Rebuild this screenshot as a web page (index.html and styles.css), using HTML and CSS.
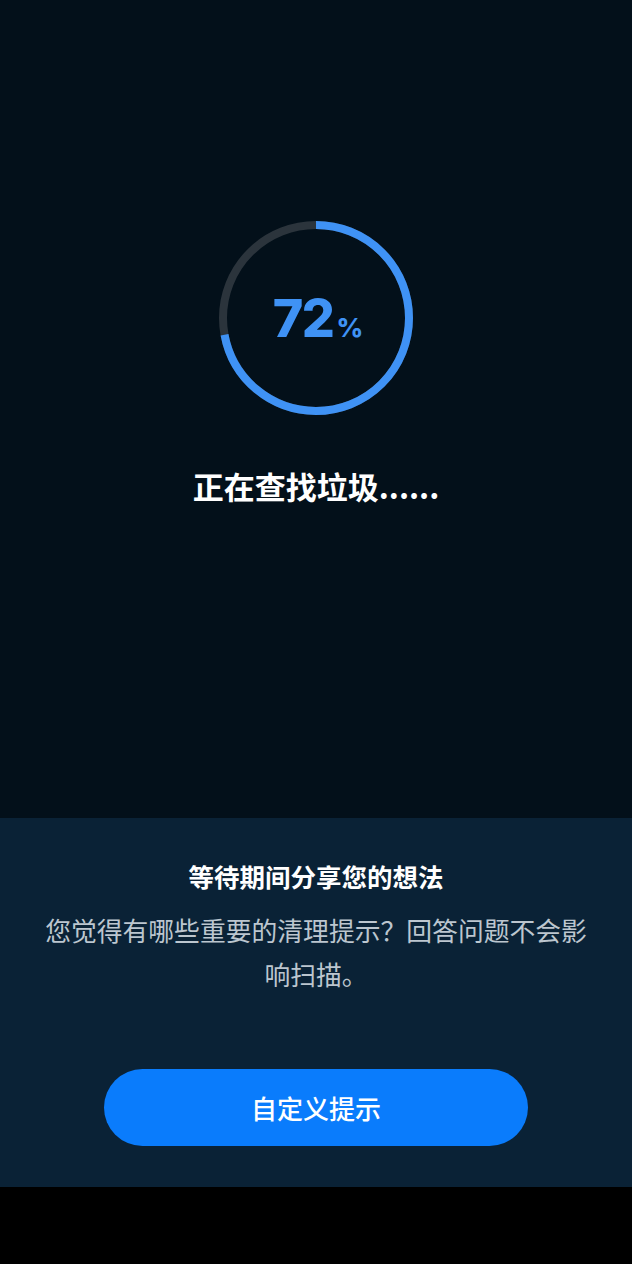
FILE: index.html
```html
<!DOCTYPE html>
<html lang="zh">
<head>
<meta charset="utf-8">
<link rel="stylesheet" href="styles.css">
</head>
<body>
<div class="screen">
  <section class="scan">
    <div class="ring">
      <svg class="ring-svg" viewBox="0 0 196 196" width="196" height="196">
        <circle class="track" cx="98" cy="98" r="93"></circle>
        <circle class="progress" cx="98" cy="98" r="93" stroke-dasharray="420.7 584.3" transform="rotate(-90 98 98)"></circle>
      </svg>
      <div class="percent"><span class="num">72</span><span class="sign">%</span></div>
    </div>
    <h1 class="status">正在查找垃圾......</h1>
  </section>
  <section class="panel">
    <h2 class="panel-title">等待期间分享您的想法</h2>
    <p class="panel-text">您觉得有哪些重要的清理提示？回答问题不会影响扫描。</p>
    <button class="cta">自定义提示</button>
  </section>
</div>
</body>
</html>
```
FILE: styles.css
```css
html, body {
  margin: 0;
  padding: 0;
  background: #000;
}
body {
  width: 632px;
  height: 1264px;
  font-family: "Noto Sans CJK SC", "Noto Sans", sans-serif;
}
.screen {
  height: 1187px;
  display: flex;
  flex-direction: column;
}
.scan {
  flex: 1;
  background: #03101a;
  display: flex;
  flex-direction: column;
  align-items: center;
  padding-top: 220px;
}
.ring {
  position: relative;
  width: 196px;
  height: 196px;
}
.ring-svg {
  display: block;
}
.track {
  fill: none;
  stroke: #2b343c;
  stroke-width: 8;
}
.progress {
  fill: none;
  stroke: #3f92f5;
  stroke-width: 8;
}
.percent {
  position: absolute;
  inset: 0;
  display: flex;
  align-items: baseline;
  justify-content: center;
  padding-top: 69px;
  padding-left: 4px;
  box-sizing: border-box;
  color: #3f92f5;
  font-family: Inter, "Noto Sans", sans-serif;
  font-weight: 800;
}
.num {
  font-size: 52px;
  line-height: 60px;
  letter-spacing: -1.5px;
}
.sign {
  font-size: 26px;
  margin-left: 3px;
}
.status {
  margin: 50px 0 0;
  font-size: 31px;
  line-height: 40px;
  font-weight: 700;
  color: #ffffff;
}
.panel {
  height: 369px;
  box-sizing: border-box;
  background: #0a2236;
  display: flex;
  flex-direction: column;
  align-items: center;
  padding: 41px 40px 41px;
}
.panel-title {
  margin: 0;
  font-size: 25.5px;
  line-height: 34px;
  font-weight: 700;
  color: #ffffff;
}
.panel-text {
  margin: 15px 0 0;
  font-size: 25.8px;
  line-height: 44px;
  color: #bcc6cf;
  text-align: center;
  max-width: 550px;
}
.cta {
  margin-top: auto;
  width: 424px;
  height: 77px;
  border: none;
  border-radius: 39px;
  background: #0a7cfc;
  color: #ffffff;
  font-family: "Noto Sans CJK SC", sans-serif;
  font-size: 26px;
  font-weight: 500;
}
```
